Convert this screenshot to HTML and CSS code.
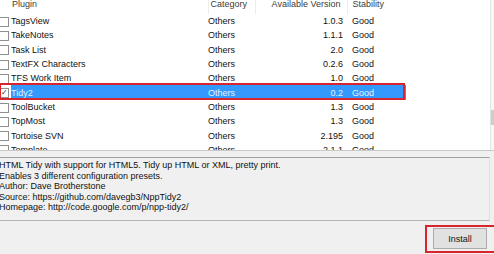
FILE: index.html
```html
<!DOCTYPE html>
<html lang="en">
<head>
  <meta charset="UTF-8" />
  <title>Plugins Admin</title>
  <link rel="stylesheet" href="styles.css">
</head>
<body>

<div class="dialog">

  <!-- PLUGIN LIST -->
  <div class="list">
    <table class="plugins">
      <colgroup>
        <col class="w-check">
        <col class="w-name">
        <col class="w-cat">
        <col class="w-ver">
        <col class="w-stab">
      </colgroup>
      <thead>
        <tr>
          <th></th>
          <th class="col-name">Plugin</th>
          <th class="col-cat sep">Category</th>
          <th class="col-ver sep">Available Version</th>
          <th class="col-stab sep">Stability</th>
        </tr>
      </thead>
      <tbody>
        <tr><td><span class="box"></span></td><td>TagsView</td><td>Others</td><td class="col-ver">1.0.3</td><td class="col-stab">Good</td></tr>
        <tr><td><span class="box"></span></td><td>TakeNotes</td><td>Others</td><td class="col-ver">1.1.1</td><td class="col-stab">Good</td></tr>
        <tr><td><span class="box"></span></td><td>Task List</td><td>Others</td><td class="col-ver">2.0</td><td class="col-stab">Good</td></tr>
        <tr><td><span class="box"></span></td><td>TextFX Characters</td><td>Others</td><td class="col-ver">0.2.6</td><td class="col-stab">Good</td></tr>
        <tr><td><span class="box"></span></td><td>TFS Work Item</td><td>Others</td><td class="col-ver">1.0</td><td class="col-stab">Good</td></tr>
        <tr class="selected"><td class="check-cell"><span class="box">&#10003;</span></td><td>Tidy2</td><td>Others</td><td class="col-ver">0.2</td><td class="col-stab">Good</td></tr>
        <tr><td><span class="box"></span></td><td>ToolBucket</td><td>Others</td><td class="col-ver">1.3</td><td class="col-stab">Good</td></tr>
        <tr><td><span class="box"></span></td><td>TopMost</td><td>Others</td><td class="col-ver">1.3</td><td class="col-stab">Good</td></tr>
        <tr><td><span class="box"></span></td><td>Tortoise SVN</td><td>Others</td><td class="col-ver">2.195</td><td class="col-stab">Good</td></tr>
        <tr><td><span class="box"></span></td><td>Template</td><td>Others</td><td class="col-ver">2.1.1</td><td class="col-stab">Good</td></tr>
      </tbody>
    </table>
    <div class="mark-row"></div>
    <div class="scrollbar"><div class="thumb"></div></div>
  </div>

  <!-- DESCRIPTION -->
  <div class="desc">
    <p>HTML Tidy with support for HTML5. Tidy up HTML or XML, pretty print.</p>
    <p>Enables 3 different configuration presets.</p>
    <p>Author: Dave Brotherstone</p>
    <p>Source: https://github.com/davegb3/NppTidy2</p>
    <p>Homepage: http://code.google.com/p/npp-tidy2/</p>
  </div>

  <!-- BUTTONS -->
  <div class="buttons">
    <div class="mark-btn">
      <button>Install</button>
    </div>
  </div>

</div>

</body>
</html>
```

FILE: styles.css
```css
html, body {
  margin: 0;
  width: 494px;
  height: 254px;
  overflow: hidden;
  background: #f0f0f0;
}
.dialog {
  font-family: "Liberation Sans", Arial, sans-serif;
  font-size: 9px;
  color: #111;
  margin-left: -6px;
  margin-top: -6px;
  width: 520px;
}
.list {
  position: relative;
  height: 156px;
  background: white;
  border-bottom: 1px solid #c8c8c8;
  overflow: hidden;
}
.plugins {
  border-collapse: collapse;
  table-layout: fixed;
  width: 412px;
}
.w-check { width: 17px; }
.w-name { width: 197px; }
.w-cat { width: 47px; }
.w-ver { width: 92px; }
.w-stab { width: 59px; }
.plugins th {
  box-sizing: border-box;
  height: 20px;
  padding: 5px 0 0 0;
  font-weight: normal;
  color: #3c3c3c;
  text-align: left;
  white-space: nowrap;
  vertical-align: top;
  line-height: 11px;
}
.plugins th.sep {
  border-left: 1px solid #ececec;
}
.plugins td {
  height: 14.3px;
  padding: 0;
  white-space: nowrap;
  overflow: hidden;
  line-height: 14px;
}
.plugins th.col-name { padding-left: 1px; }
.plugins th.col-cat { padding-left: 2px; }
.plugins .col-ver { text-align: right; padding-right: 4px; }
.plugins th.col-ver { padding-right: 6px; }
.plugins .col-stab { padding-left: 5px; }
.box {
  display: inline-block;
  width: 8px;
  height: 8px;
  margin-left: 5px;
  border: 1px solid #8f8f8f;
  background: white;
  vertical-align: middle;
  font-size: 8px;
  line-height: 8px;
  color: #333;
  text-align: center;
}
.selected td {
  background: #3399ff;
  color: #e8f3ff;
}
.selected td.check-cell {
  background: white;
}
.mark-row {
  position: absolute;
  left: 5px;
  top: 89px;
  width: 402px;
  height: 13px;
  border: 2px solid #d8242c;
}
.scrollbar {
  position: absolute;
  left: 496px;
  top: 0;
  bottom: 0;
  width: 17px;
  border-left: 1px solid #e2e2e2;
  background: #f7f7f7;
}
.thumb {
  margin-top: 116px;
  height: 15px;
  background: #cdcdcd;
}
.desc {
  margin-top: 6px;
  width: 495px;
  height: 60px;
  padding-top: 2px;
  border-top: 1px solid #a0a0a0;
  border-right: 1px solid #e0e0e0;
  border-bottom: 1px solid #b4b4b4;
}
.desc p {
  margin: 0;
  padding-left: 5px;
  line-height: 10.5px;
}
.buttons {
  width: 502px;
  display: flex;
  justify-content: flex-end;
  padding-top: 4px;
}
.mark-btn {
  border: 2px solid #d8242c;
  padding: 1px 7px 2px 6px;
}
button {
  width: 54px;
  height: 21px;
  font-family: "Liberation Sans", Arial, sans-serif;
  font-size: 9px;
  color: #111;
  background: #e1e1e1;
  border: 1px solid #adadad;
  border-radius: 0;
  padding: 0;
}
```
